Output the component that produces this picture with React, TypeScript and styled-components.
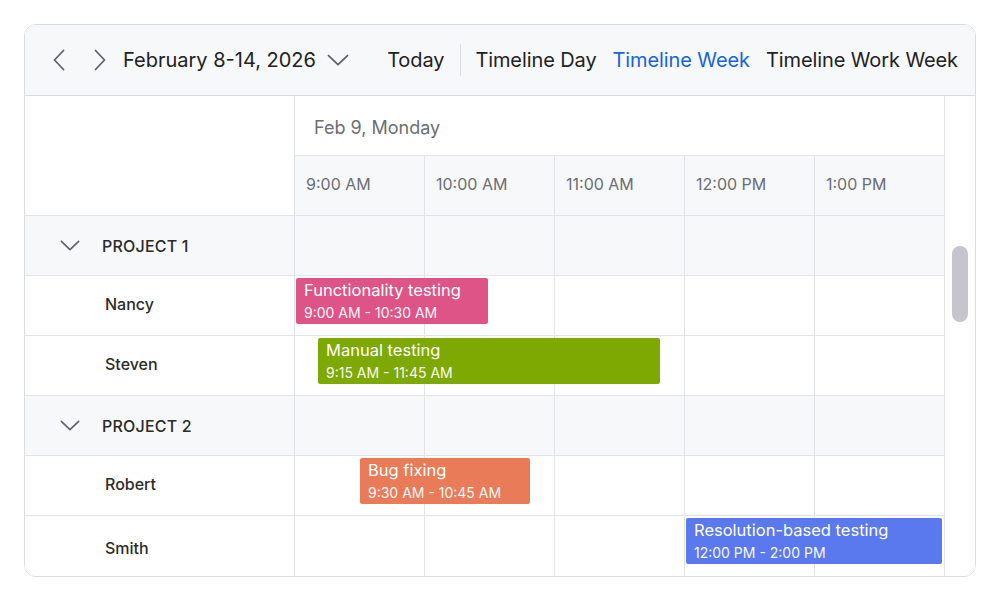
import React from "react";
import styled, { createGlobalStyle } from "styled-components";

const GlobalStyle = createGlobalStyle`
  html, body {
    margin: 0;
    padding: 0;
    background: #ffffff;
  }
  body {
    font-family: Inter, "Noto Sans", "Liberation Sans", sans-serif;
    color: #222;
  }
`;

const colors = {
  border: "#d9dce0",
  grid: "#e2e4e7",
  soft: "#f7f8fa",
  text: "#222222",
  muted: "#6b6e73",
  accent: "#1565d8",
};

const Page = styled.div`
  padding: 24px;
`;

const Frame = styled.div`
  width: 952px;
  box-sizing: border-box;
  border: 1px solid ${colors.border};
  border-radius: 12px;
  overflow: hidden;
  background: #fff;
`;

const Toolbar = styled.div`
  height: 71px;
  box-sizing: border-box;
  display: flex;
  align-items: center;
  background: ${colors.soft};
  border-bottom: 1px solid ${colors.border};
  padding: 0 17px 0 16px;
`;

const IconButton = styled.button`
  width: 36px;
  height: 36px;
  padding: 0;
  border: none;
  background: transparent;
  display: flex;
  align-items: center;
  justify-content: center;
  margin-right: 5px;
  color: #5f6368;
`;

const DateButton = styled.button`
  display: flex;
  align-items: center;
  gap: 11px;
  padding: 0;
  border: none;
  background: transparent;
  font-family: inherit;
  font-size: 20px;
  color: ${colors.text};
`;

const Views = styled.div`
  margin-left: auto;
  display: flex;
  align-items: center;
  gap: 16px;
`;

const ViewItem = styled.span<{ $active?: boolean }>`
  font-size: 20px;
  letter-spacing: -0.1px;
  color: ${(p) => (p.$active ? colors.accent : colors.text)};
  white-space: nowrap;
`;

const Divider = styled.span`
  width: 1px;
  height: 32px;
  background: ${colors.border};
  margin-right: -2px;
`;

const Body = styled.div`
  display: flex;
`;

const Grid = styled.div`
  width: 920px;
`;

const ScrollTrack = styled.div`
  flex: 1;
  background: #fff;
`;

const ScrollThumb = styled.div`
  width: 16px;
  height: 76px;
  margin: 150px 0 0 7px;
  border-radius: 8px;
  background: #c6c4cc;
`;

const Row = styled.div<{ $group?: boolean; $height?: number; $last?: boolean }>`
  display: flex;
  height: ${(p) => p.$height ?? 60}px;
  box-sizing: border-box;
  background: ${(p) => (p.$group ? colors.soft : "#fff")};
  border-bottom: ${(p) => (p.$last ? "none" : `1px solid ${colors.grid}`)};
`;

const LabelCell = styled.div<{ $indent?: number; $shift?: number }>`
  width: 270px;
  flex: none;
  box-sizing: border-box;
  border-right: 1px solid ${colors.grid};
  display: flex;
  align-items: center;
  padding-left: ${(p) => p.$indent ?? 0}px;
  padding-bottom: ${(p) => Math.max(0, -(p.$shift ?? 0))}px;
  padding-top: ${(p) => Math.max(0, p.$shift ?? 0)}px;
`;

const HeaderCorner = styled.div`
  width: 270px;
  height: 120px;
  flex: none;
  box-sizing: border-box;
  border-right: 1px solid ${colors.grid};
  border-bottom: 1px solid ${colors.grid};
`;

const HeaderMain = styled.div`
  flex: 1;
  display: flex;
  flex-direction: column;
`;

const DateCell = styled.div`
  height: 60px;
  box-sizing: border-box;
  border-right: 1px solid ${colors.grid};
  border-bottom: 1px solid ${colors.grid};
  display: flex;
  align-items: center;
  padding: 3px 0 0 19px;
  font-size: 18px;
  color: ${colors.muted};
`;

const TimeRow = styled.div`
  height: 60px;
  display: flex;
  background: ${colors.soft};
`;

const TimeCell = styled.div`
  width: 130px;
  box-sizing: border-box;
  border-right: 1px solid ${colors.grid};
  border-bottom: 1px solid ${colors.grid};
  display: flex;
  align-items: center;
  padding: 0 0 4px 11px;
  font-size: 16px;
  color: ${colors.muted};
`;

const Track = styled.div`
  position: relative;
  flex: 1;
  display: flex;
`;

const Slot = styled.div`
  width: 130px;
  box-sizing: border-box;
  border-right: 1px solid ${colors.grid};
`;

const GroupName = styled.span`
  font-size: 16px;
  font-weight: 500;
  letter-spacing: 0.2px;
  color: #2a2a2a;
  margin-left: 22px;
`;

const ResourceName = styled.span`
  font-size: 16px;
  font-weight: 500;
  color: #2b2b2b;
`;

const Event = styled.div<{ $color: string }>`
  position: absolute;
  top: 2px;
  height: 46px;
  box-sizing: border-box;
  padding: 2px 8px 0;
  border-radius: 2px;
  background: ${(p) => p.$color};
  color: #fff;
  display: flex;
  flex-direction: column;
  overflow: hidden;
  white-space: nowrap;
`;

const EventTitle = styled.span`
  font-size: 16.5px;
  line-height: 20px;
`;

const EventTime = styled.span`
  font-size: 14px;
  line-height: 26px;
  opacity: 0.95;
`;

const ChevronLeft = () => (
  <svg width="14" height="22" viewBox="0 0 14 22" fill="none">
    <path d="M11.5 1.5 L2.5 11 L11.5 20.5" stroke="#5f6368" strokeWidth="1.8" strokeLinecap="round" strokeLinejoin="round" />
  </svg>
);

const ChevronRight = () => (
  <svg width="14" height="22" viewBox="0 0 14 22" fill="none">
    <path d="M2.5 1.5 L11.5 11 L2.5 20.5" stroke="#5f6368" strokeWidth="1.8" strokeLinecap="round" strokeLinejoin="round" />
  </svg>
);

const ChevronDown = ({ size = 22 }: { size?: number }) => (
  <svg width={size} height={size * 0.55} viewBox="0 0 22 12" fill="none">
    <path d="M1.5 1.5 L11 10.5 L20.5 1.5" stroke="#5f6368" strokeWidth="1.8" strokeLinecap="round" strokeLinejoin="round" />
  </svg>
);

type CalEvent = {
  title: string;
  time: string;
  color: string;
  left: number;
  width: number;
};

type RowData =
  | { kind: "group"; name: string }
  | { kind: "resource"; name: string; events: CalEvent[] };

const rows: RowData[] = [
  { kind: "group", name: "PROJECT 1" },
  {
    kind: "resource",
    name: "Nancy",
    events: [{ title: "Functionality testing", time: "9:00 AM - 10:30 AM", color: "#df5487", left: 1, width: 192 }],
  },
  {
    kind: "resource",
    name: "Steven",
    events: [{ title: "Manual testing", time: "9:15 AM - 11:45 AM", color: "#7ea903", left: 23, width: 342 }],
  },
  { kind: "group", name: "PROJECT 2" },
  {
    kind: "resource",
    name: "Robert",
    events: [{ title: "Bug fixing", time: "9:30 AM - 10:45 AM", color: "#e97b59", left: 65, width: 170 }],
  },
  {
    kind: "resource",
    name: "Smith",
    events: [{ title: "Resolution-based testing", time: "12:00 PM - 2:00 PM", color: "#5b79ee", left: 391, width: 256 }],
  },
];

const times = ["9:00 AM", "10:00 AM", "11:00 AM", "12:00 PM", "1:00 PM"];

const Slots = () => (
  <>
    {times.map((t) => (
      <Slot key={t} />
    ))}
  </>
);

export default function App() {
  return (
    <Page>
      <GlobalStyle />
      <Frame>
        <Toolbar>
          <IconButton aria-label="Previous">
            <ChevronLeft />
          </IconButton>
          <IconButton aria-label="Next">
            <ChevronRight />
          </IconButton>
          <DateButton>
            February 8-14, 2026
            <ChevronDown />
          </DateButton>
          <Views>
            <ViewItem>Today</ViewItem>
            <Divider />
            <ViewItem>Timeline Day</ViewItem>
            <ViewItem $active>Timeline Week</ViewItem>
            <ViewItem>Timeline Work Week</ViewItem>
          </Views>
        </Toolbar>
        <Body>
          <Grid>
            <Row $height={120} $last>
              <HeaderCorner />
              <HeaderMain>
                <DateCell>Feb 9, Monday</DateCell>
                <TimeRow>
                  {times.map((t) => (
                    <TimeCell key={t}>{t}</TimeCell>
                  ))}
                </TimeRow>
              </HeaderMain>
            </Row>
            {rows.map((r, i) => {
              const last = i === rows.length - 1;
              return r.kind === "group" ? (
                <Row key={r.name} $group>
                  <LabelCell $indent={35}>
                    <ChevronDown size={20} />
                    <GroupName>{r.name}</GroupName>
                  </LabelCell>
                  <Track>
                    <Slots />
                  </Track>
                </Row>
              ) : (
                <Row key={r.name} $last={last}>
                  <LabelCell $indent={80} $shift={last ? 3 : -3}>
                    <ResourceName>{r.name}</ResourceName>
                  </LabelCell>
                  <Track>
                    <Slots />
                    {r.events.map((e) => (
                      <Event key={e.title} $color={e.color} style={{ left: e.left, width: e.width }}>
                        <EventTitle>{e.title}</EventTitle>
                        <EventTime>{e.time}</EventTime>
                      </Event>
                    ))}
                  </Track>
                </Row>
              );
            })}
          </Grid>
          <ScrollTrack>
            <ScrollThumb />
          </ScrollTrack>
        </Body>
      </Frame>
    </Page>
  );
}
